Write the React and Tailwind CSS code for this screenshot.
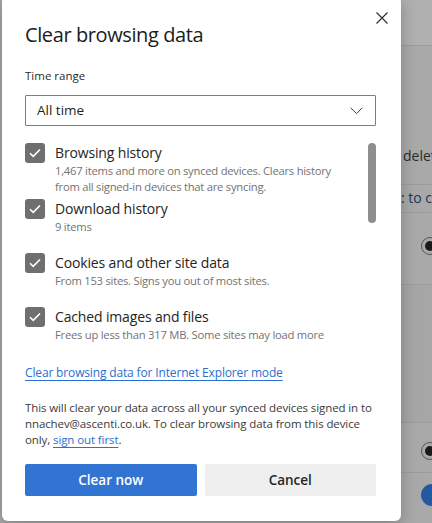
import React from 'react'

const items = [
  {
    label: 'Browsing history',
    desc: ['1,467 items and more on synced devices. Clears history', 'from all signed-in devices that are syncing.'],
    gap: 'mb-[4px]',
  },
  { label: 'Download history', desc: ['9 items'], gap: 'mb-[18px]' },
  { label: 'Cookies and other site data', desc: ['From 153 sites. Signs you out of most sites.'], gap: 'mb-[18px]' },
  { label: 'Cached images and files', desc: ['Frees up less than 317 MB. Some sites may load more'], gap: '' },
]

const CheckBox = () => (
  <div className="w-[20px] h-[20px] rounded-[3px] bg-[#6f6f6f] flex items-center justify-center shrink-0">
    <svg width="12" height="10" viewBox="0 0 12 10" fill="none">
      <path d="M1 5.2 L4.2 8.3 L11 1.5" stroke="white" strokeWidth="1.6" />
    </svg>
  </div>
)

const Radio = () => (
  <div className="w-[18px] h-[18px] rounded-full border border-[#555] flex items-center justify-center">
    <div className="w-[10px] h-[10px] rounded-full bg-[#1a1a1a]" />
  </div>
)

const App = () => {
  return (
    <div
      className="relative w-[432px] h-[523px] overflow-hidden bg-[#a9a9a9]"
      style={{ fontFamily: '"Segoe UI", "Open Sans", sans-serif' }}
    >
      {/* dimmed page behind the dialog */}
      <div className="absolute left-[401px] top-0 w-[31px] h-full flex flex-col text-[14px] text-[#1c2f4a]">
        <div className="h-[46px] bg-[#b0b0b0] border-b border-[#9c9c9c]" />
        <div className="h-[95px]" />
        <div className="h-[30px] pl-[2px] text-[#2a2a2a] leading-[30px] whitespace-nowrap">delet</div>
        <div className="h-[14px] border-b border-[#9c9c9c]" />
        <div className="h-[28px] leading-[26px] whitespace-nowrap text-[#1f3550] border-b border-[#9c9c9c]">: to cl</div>
        <div className="h-[72px] border-b border-[#9c9c9c] pt-[24px] pl-[20px]">
          <Radio />
        </div>
        <div className="h-[138px] bg-[#a6a6a6] border-b border-[#9c9c9c]" />
        <div className="h-[50px] border-b border-[#9c9c9c] pt-[19px] pl-[20px]">
          <Radio />
        </div>
        <div className="pt-[11px] pl-[20px]">
          <div className="w-[22px] h-[22px] rounded-full bg-[#24589f]" />
        </div>
      </div>

      {/* dialog */}
      <div className="absolute left-[2px] top-[-4px] w-[399px] h-[525px] bg-white rounded-[6px] shadow-[0_4px_16px_rgba(0,0,0,0.25)] pl-[23px] pr-[25px] pt-[25px] flex flex-col">
        <button className="absolute left-[371px] top-[13px] w-[18px] h-[18px] flex items-center justify-center">
          <svg width="12" height="12" viewBox="0 0 12 12" fill="none">
            <path d="M0.5 0.5 L11.5 11.5 M11.5 0.5 L0.5 11.5" stroke="#2b2b2b" strokeWidth="1.1" />
          </svg>
        </button>

        <h1 className="text-[20px] leading-[28px] font-medium text-[#1b1b1b] tracking-[-0.4px]">Clear browsing data</h1>

        <div className="mt-[19px] text-[11.5px] leading-[16px] text-[#2b2b2b]">Time range</div>

        <div className="mt-[11px] h-[31px] border-[1.5px] border-[#7d7d7d] rounded-[1px] flex items-center justify-between pl-[11px] pr-[12px]">
          <span className="text-[13.5px] text-[#1f1f1f]">All time</span>
          <svg width="13" height="8" viewBox="0 0 13 8" fill="none">
            <path d="M0.7 0.8 L6.5 6.6 L12.3 0.8" stroke="#3a3a3a" strokeWidth="1" />
          </svg>
        </div>

        <div className="relative mt-[17px] h-[218px]">
          <div className="absolute right-0 top-0 w-[8px] h-[80px] rounded-full bg-[#8e8e8e]" />
          <div className="pr-[12px]">
            {items.map((item) => (
              <div key={item.label} className={`flex gap-[10px] ${item.gap}`}>
                <CheckBox />
                <div className="flex flex-col">
                  <span className="text-[14px] leading-[20px] tracking-[-0.15px] text-[#242424]">{item.label}</span>
                  {item.desc.map((line) => (
                    <span key={line} className="text-[11.25px] leading-[16px] tracking-[-0.25px] text-[#737373] whitespace-nowrap">
                      {line}
                    </span>
                  ))}
                </div>
              </div>
            ))}
          </div>
        </div>

        <a href="#" className="mt-[4px] self-start text-[12px] leading-[16px] tracking-[-0.15px] text-[#2b6fd0] underline underline-offset-[3px]">
          Clear browsing data for Internet Explorer mode
        </a>

        <p className="mt-[19px] text-[11.5px] leading-[16px] tracking-[-0.1px] text-[#3a3a3a]">
          This will clear your data across all your synced devices signed in to nnachev@ascenti.co.uk. To clear browsing
          data from this device only,{' '}
          <a href="#" className="text-[#2b6fd0] underline underline-offset-[3px]">sign out first</a>.
        </p>

        <div className="mt-[16px] flex gap-[8px]">
          <button className="w-[172px] h-[32px] rounded-[2px] bg-[#3174d1] text-white text-[13.5px] font-semibold">
            Clear now
          </button>
          <button className="w-[172px] h-[32px] rounded-[2px] bg-[#efefef] text-[#262626] text-[13.5px] font-semibold">
            Cancel
          </button>
        </div>
      </div>
    </div>
  )
}

export default App
